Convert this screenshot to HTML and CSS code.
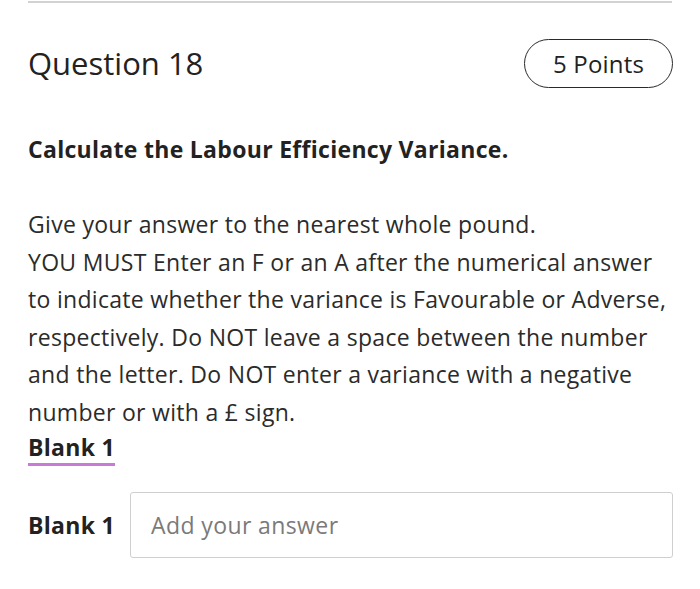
FILE: index.html
```html
<!DOCTYPE html>
<html lang="en">
<head>
<meta charset="utf-8">
<title>Question 18</title>
<link rel="stylesheet" href="styles.css">
</head>
<body>
<div class="page">
  <div class="rule"></div>
  <div class="header">
    <h2 class="title">Question 18</h2>
    <span class="points">5 Points</span>
  </div>
  <p class="prompt">Calculate the Labour Efficiency Variance.</p>
  <p class="body">Give your answer to the nearest whole pound.<br>YOU MUST Enter an F or an A after the numerical answer to indicate whether the variance is Favourable or Adverse, respectively. Do NOT leave a space between the number and the letter. Do NOT enter a variance with a negative number or with a £ sign.</p>
  <div class="tabs"><span class="tab">Blank 1</span></div>
  <div class="answer-row">
    <label class="answer-label" for="blank1">Blank 1</label>
    <input id="blank1" class="answer-input" type="text" placeholder="Add your answer">
  </div>
</div>
</body>
</html>
```

FILE: styles.css
```css
html, body {
  margin: 0;
  padding: 0;
  background: #ffffff;
}
body {
  font-family: "Open Sans", "Noto Sans", sans-serif;
  color: #262626;
}
.page {
  padding: 1px 28px 0 28px;
}
.rule {
  height: 2px;
  background: #d2d2d2;
}
.header {
  margin-top: 36px;
  display: flex;
  align-items: center;
  justify-content: space-between;
}
.title {
  margin: 0;
  font-size: 31px;
  font-weight: 400;
  line-height: 49px;
  color: #222;
}
.points {
  box-sizing: border-box;
  height: 49px;
  width: 149px;
  margin-right: -1px;
  border: 1.5px solid #2a2a2a;
  border-radius: 25px;
  display: flex;
  align-items: center;
  justify-content: center;
  font-size: 24px;
  letter-spacing: 0.2px;
  color: #222;
}
.prompt {
  margin: 46px 0 0 0;
  font-size: 23px;
  letter-spacing: 0.3px;
  font-weight: 700;
  line-height: 30px;
  color: #222;
}
.body {
  margin: 42px 0 0 0;
  font-size: 23px;
  letter-spacing: 0.3px;
  line-height: 37.5px;
  color: #2b2b2b;
}
.tabs {
  margin-top: 1px;
}
.tab {
  display: inline-block;
  font-size: 23px;
  letter-spacing: 0.3px;
  font-weight: 700;
  line-height: 30px;
  padding-bottom: 1px;
  border-bottom: 3px solid #c77ad6;
  color: #222;
}
.answer-row {
  margin-top: 26px;
  display: flex;
  align-items: center;
  gap: 15px;
}
.answer-label {
  font-size: 23px;
  letter-spacing: 0.3px;
  font-weight: 700;
  color: #222;
}
.answer-input {
  flex: 1;
  box-sizing: border-box;
  height: 66px;
  margin-right: -1px;
  border: 1.5px solid #cfcfcf;
  border-radius: 3px;
  padding: 0 20px;
  font-family: "Open Sans", "Noto Sans", sans-serif;
  font-size: 23px;
  letter-spacing: 0.4px;
  color: #222;
  outline: none;
}
.answer-input::placeholder {
  color: #7a7a7a;
}
```
